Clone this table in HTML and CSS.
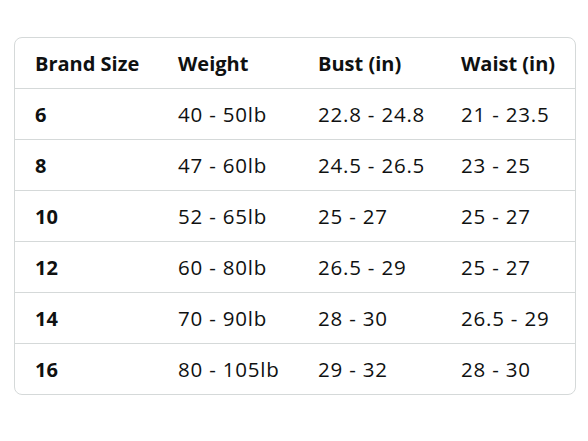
FILE: index.html
```html
<!DOCTYPE html>
<html lang="en">
<head>
<meta charset="utf-8">
<title>Size Chart</title>
<link rel="stylesheet" href="styles.css">
</head>
<body>
<div class="card">
  <div class="row head">
    <div class="cell">Brand Size</div>
    <div class="cell">Weight</div>
    <div class="cell">Bust (in)</div>
    <div class="cell">Waist (in)</div>
  </div>
  <div class="row">
    <div class="cell key">6</div>
    <div class="cell">40 - 50lb</div>
    <div class="cell">22.8 - 24.8</div>
    <div class="cell">21 - 23.5</div>
  </div>
  <div class="row">
    <div class="cell key">8</div>
    <div class="cell">47 - 60lb</div>
    <div class="cell">24.5 - 26.5</div>
    <div class="cell">23 - 25</div>
  </div>
  <div class="row">
    <div class="cell key">10</div>
    <div class="cell">52 - 65lb</div>
    <div class="cell">25 - 27</div>
    <div class="cell">25 - 27</div>
  </div>
  <div class="row">
    <div class="cell key">12</div>
    <div class="cell">60 - 80lb</div>
    <div class="cell">26.5 - 29</div>
    <div class="cell">25 - 27</div>
  </div>
  <div class="row">
    <div class="cell key">14</div>
    <div class="cell">70 - 90lb</div>
    <div class="cell">28 - 30</div>
    <div class="cell">26.5 - 29</div>
  </div>
  <div class="row">
    <div class="cell key">16</div>
    <div class="cell">80 - 105lb</div>
    <div class="cell">29 - 32</div>
    <div class="cell">28 - 30</div>
  </div>
</div>
</body>
</html>
```
FILE: styles.css
```css
html, body {
  margin: 0;
  padding: 0;
  background: #ffffff;
}
body {
  font-family: "Open Sans", "Noto Sans", sans-serif;
  color: #0f1111;
  font-size: 20px;
}
.card {
  box-sizing: border-box;
  width: 562px;
  margin: 37px 0 0 14px;
  border: 1px solid #d5d9d9;
  border-radius: 8px;
}
.row {
  display: grid;
  grid-template-columns: 143px 140px 143px 1fr;
  height: 50px;
  align-items: center;
}
.row + .row {
  border-top: 1px solid #d5d9d9;
}
.cell {
  padding-left: 20px;
  white-space: nowrap;
  font-size: 20.5px;
  letter-spacing: 0.8px;
}
.head .cell,
.cell.key {
  font-size: 20px;
  font-weight: 700;
  letter-spacing: 0;
}
```
